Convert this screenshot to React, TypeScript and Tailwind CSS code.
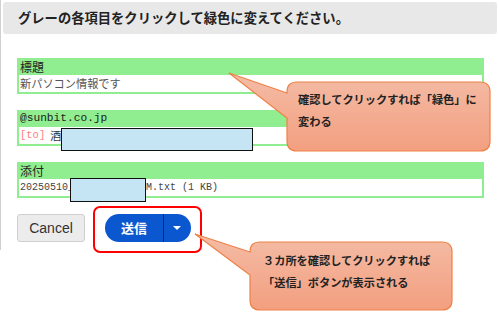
const jp = "font-['Noto_Sans_CJK_JP',sans-serif]";
const mono = "font-['Liberation_Mono','Noto_Sans_CJK_JP',monospace]";

function Section({ title, titleClass, children }: { title: string; titleClass: string; children: React.ReactNode }) {
  return (
    <div className="border-2 border-[#90ee90] bg-white">
      <div className="h-[15px] bg-[#90ee90] pl-[1px]">
        <span className={`relative -top-[1px] block h-[15px] leading-[15px] text-[#222] ${titleClass}`}>{title}</span>
      </div>
      <div className="h-[17px] leading-[17px] pl-[1px] flex items-center">{children}</div>
    </div>
  );
}

function Callout({ left, top, w, h, d, lines, textLeft }: { left: number; top: number; w: number; h: number; d: string; lines: string[]; textLeft: number }) {
  return (
    <div className="absolute" style={{ left, top, width: w, height: h }}>
      <svg width={w} height={h} className="absolute left-0 top-0">
        <defs>
          <linearGradient id={`g${left}`} x1="0" y1="0" x2="0" y2="1">
            <stop offset="0" stopColor="#f4bca6" />
            <stop offset="1" stopColor="#f39f80" />
          </linearGradient>
        </defs>
        <path d={d} fill={`url(#g${left})`} stroke="#ee8146" strokeWidth="1.2" />
      </svg>
      <div className={`absolute top-[16px] text-[11.2px] leading-[22px] font-bold text-[#222] whitespace-nowrap ${jp}`} style={{ left: textLeft }}>
        {lines.map((l) => (
          <div key={l}>{l}</div>
        ))}
      </div>
    </div>
  );
}

export default function App() {
  return (
    <div className={`relative w-[499px] h-[312px] bg-white overflow-hidden ${jp}`}>
      <div className="h-[250px] border-l border-[#d0d0d0] pl-[2px] pt-[2px]">
        <div className="h-[32px] mr-[2px] bg-[#e8e8e8] rounded-[3px] flex items-center pl-[15px] text-[13.3px] font-bold text-[#222]">
          グレーの各項目をクリックして緑色に変えてください。
        </div>
        <div className="ml-[14px] mr-[15px] mt-[24px] flex flex-col gap-[16px]">
          <Section title="標題" titleClass="text-[12px]">
            <span className="text-[11.2px] text-[#555]">新パソコン情報です</span>
          </Section>
          <Section title="@sunbit.co.jp" titleClass={`text-[11.2px] ${mono}`}>
            <span className={`text-[10.5px] text-[#ff8080] ${mono}`}>[to]</span>
            <span className="ml-[5px] text-[11px] text-[#333]">酒</span>
          </Section>
          <Section title="添付" titleClass="text-[12px]">
            <span className={`text-[10px] text-[#444] whitespace-pre ${mono}`}>20250510_            M.txt (1 KB)</span>
          </Section>
        </div>
        <div className="ml-[14px] mt-[16px] flex items-center gap-[20px]">
          <div className="w-[68px] h-[28px] rounded-[3px] bg-[#ececec] border border-[#cfcfcf] flex items-center justify-center text-[14px] text-[#333] font-['Liberation_Sans',sans-serif]">
            Cancel
          </div>
          <div className="h-[28px] flex rounded-full bg-[#0b57d0] overflow-hidden">
            <div className="w-[59px] flex items-center justify-center text-white text-[13px] font-bold border-r border-[#0a2a66]">
              送信
            </div>
            <div className="w-[27px] flex items-center justify-center">
              <div className="w-0 h-0 border-l-[4px] border-r-[4px] border-t-[4px] border-l-transparent border-r-transparent border-t-white mr-[2px]" />
            </div>
          </div>
        </div>
      </div>

      {/* annotations */}
      <div className="absolute left-[61px] top-[128px] w-[192px] h-[23px] bg-[#c5e4f4] border-[1.5px] border-[#111]" />
      <div className="absolute left-[70px] top-[178px] w-[76px] h-[24px] bg-[#c5e4f4] border-[1.5px] border-[#111]" />
      <div className="absolute left-[93px] top-[206px] w-[109px] h-[47px] border-2 border-[#ff0000] rounded-[7px]" />

      <Callout
        left={228}
        top={72}
        w={264}
        h={82}
        d="M69 10 H252 Q262 10 262 20 V69 Q262 79 252 79 H69 Q59 79 59 69 V46 L1 1 L59 21 V20 Q59 10 69 10 Z"
        lines={["確認してクリックすれば「緑色」に", "変わる"]}
        textLeft={70}
      />
      <Callout
        left={194}
        top={233}
        w={260}
        h={79}
        d="M66 9 H248 Q258 9 258 19 V67 Q258 77 248 77 H66 Q56 77 56 67 V42 L1 1 L56 19 V19 Q56 9 66 9 Z"
        lines={["３カ所を確認してクリックすれば", "「送信」ボタンが表示される"]}
        textLeft={69}
      />
    </div>
  );
}
